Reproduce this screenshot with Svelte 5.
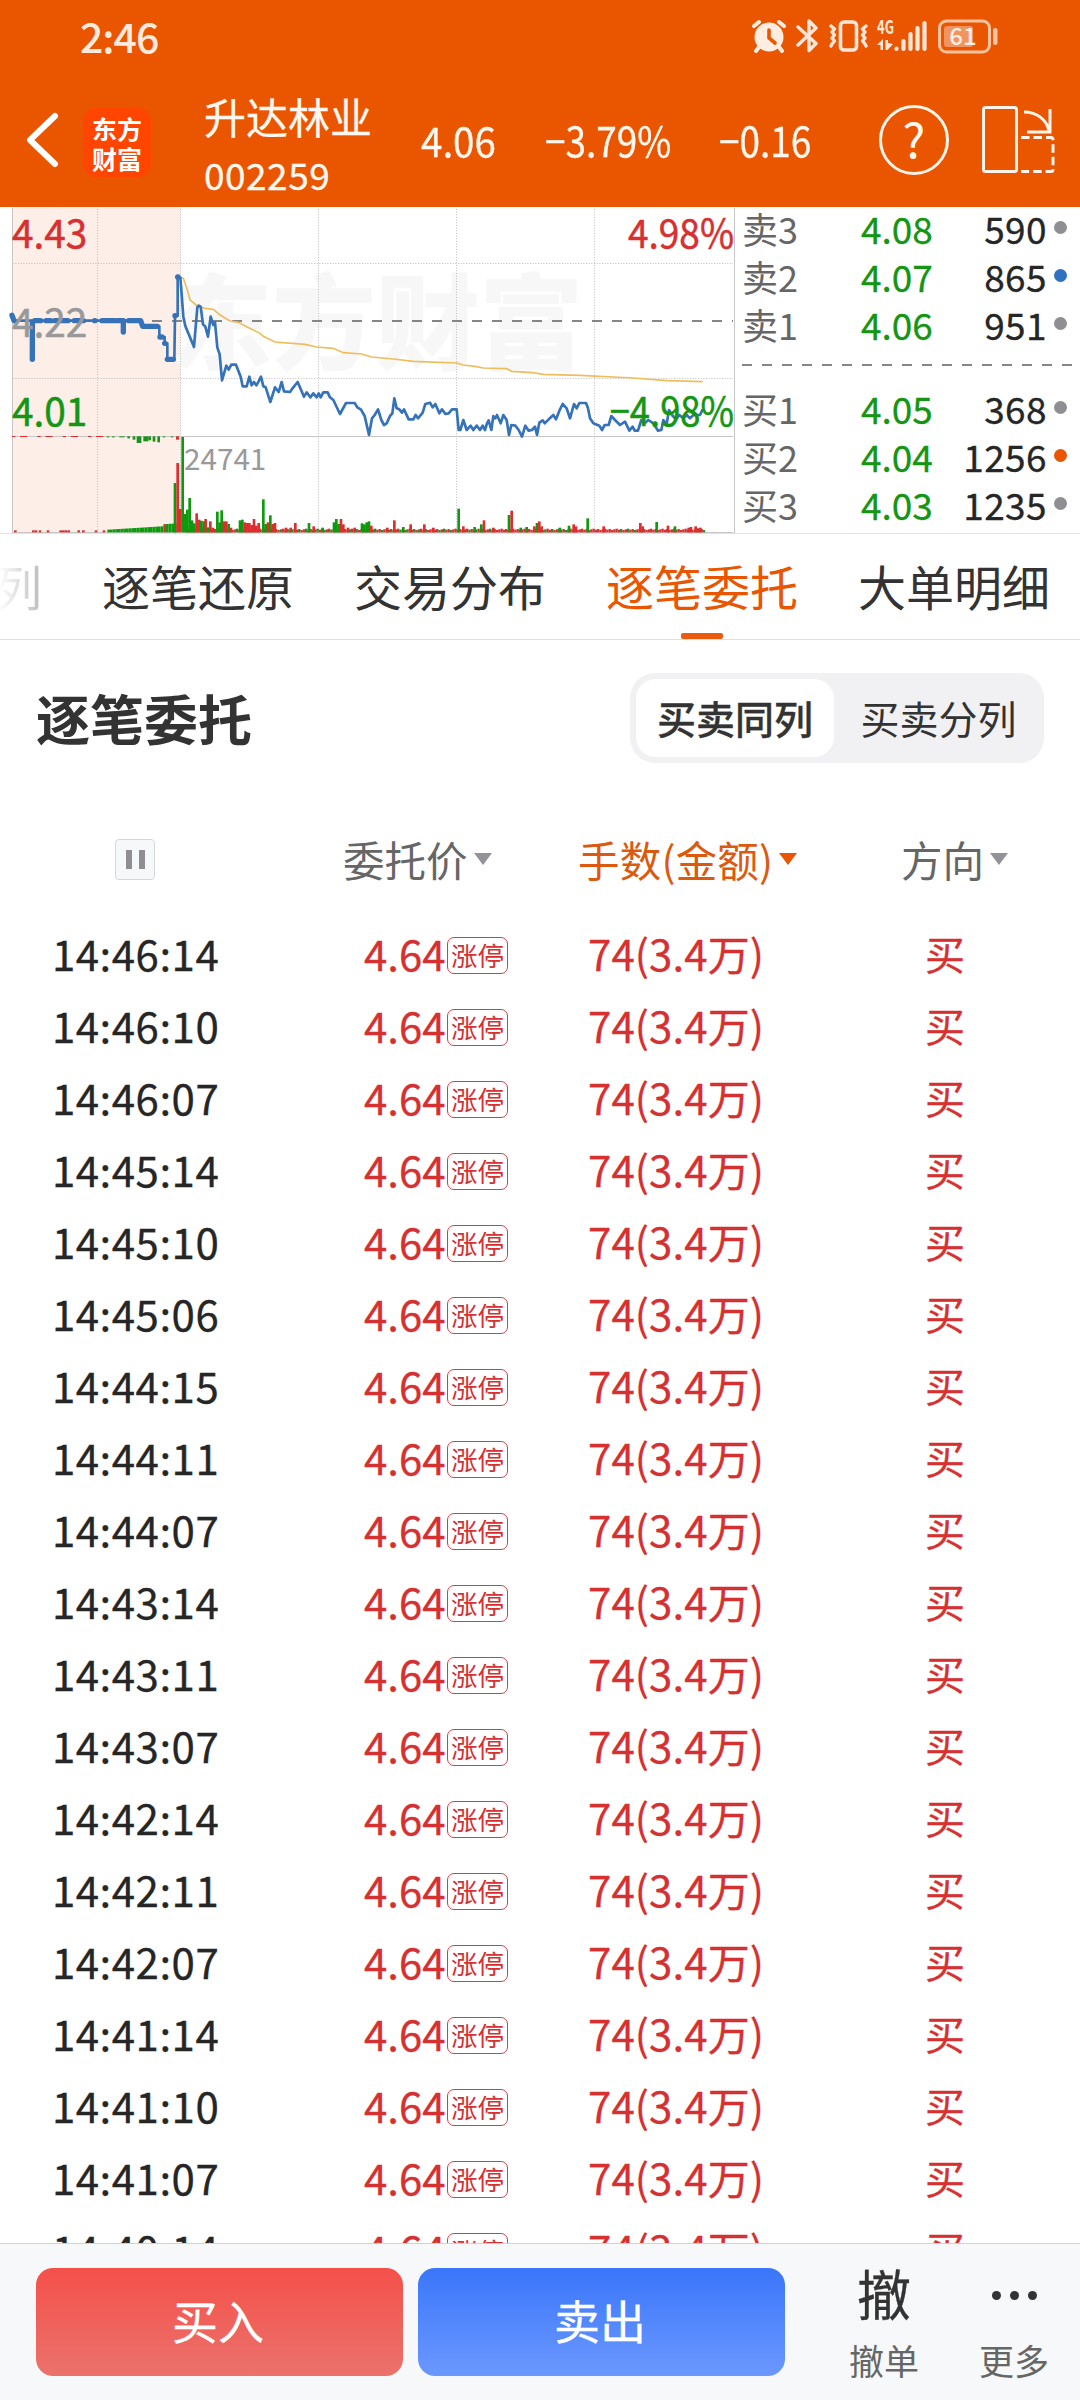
<script lang="ts">
	type Level = { label: string; price: string; qty: string; dot: string };
	type Bar = [x: number, height: number, up: boolean];

	const asks: Level[] = [
		{ label: '卖3', price: '4.08', qty: '590', dot: 'grey' },
		{ label: '卖2', price: '4.07', qty: '865', dot: 'blue' },
		{ label: '卖1', price: '4.06', qty: '951', dot: 'grey' }
	];

	const bids: Level[] = [
		{ label: '买1', price: '4.05', qty: '368', dot: 'grey' },
		{ label: '买2', price: '4.04', qty: '1256', dot: 'orange' },
		{ label: '买3', price: '4.03', qty: '1235', dot: 'grey' }
	];

	const tabs = ['逐笔还原', '交易分布', '逐笔委托', '大单明细'];
	let activeTab = $state('逐笔委托');

	const modes = ['买卖同列', '买卖分列'];
	let mode = $state('买卖同列');

	const times = [
		'14:46:14', '14:46:10', '14:46:07', '14:45:14', '14:45:10', '14:45:06', '14:44:15',
		'14:44:11', '14:44:07', '14:43:14', '14:43:11', '14:43:07', '14:42:14', '14:42:11',
		'14:42:07', '14:41:14', '14:41:10', '14:41:07', '14:40:14'
	];

	// chart units are a third of a pixel
	const auction =
		'36,345 42,362 97,362 97,478 97,362 370,362 370,396 370,362 425,362 425,379 478,379 478,411 494,411 494,430 502,430 502,478 523,478 525,347 533,347 533,231 541,231';
	// stretches where consecutive auction ticks merge into a thick stroke
	const auctionTicks =
		'M36 346L42 362M97 366V478M104 362H122M138 362H152M164 362H204M223 362H250M284 362H285M306 362H344M352 362H370V396M386 362H422L428 379H472M480 411H486M494 430H495M502 478H520M525 347H526M533 231H534';
	const price =
		'541,231 550,350 556,378 582,441 592,322 596,317 602,320 609,373 616,380 624,410 632,350 640,375 645,367 652,443 659,463 666,541 679,497 686,509 694,494 708,494 722,530 728,559 740,559 748,530 755,556 762,546 769,556 776,544 783,530 790,559 797,562 811,606 825,562 836,576 845,546 852,574 870,576 880,562 893,546 912,590 920,577 931,592 940,580 950,592 956,580 962,592 970,577 983,577 990,592 1000,600 1020,642 1038,609 1064,609 1072,622 1083,629 1094,648 1107,705 1116,655 1124,645 1134,628 1144,660 1152,675 1160,670 1170,648 1177,640 1183,595 1190,625 1198,628 1206,638 1212,628 1226,658 1240,658 1247,645 1254,655 1268,638 1276,612 1290,608 1298,622 1306,612 1318,640 1326,628 1336,642 1346,640 1356,628 1370,628 1376,690 1381,690 1390,660 1400,690 1412,677 1420,690 1430,677 1440,690 1448,677 1455,690 1461,670 1466,661 1474,690 1480,648 1486,655 1491,645 1502,670 1510,645 1520,660 1527,705 1534,675 1546,677 1556,690 1566,710 1576,677 1586,692 1596,690 1605,680 1611,705 1618,668 1628,661 1634,670 1646,658 1660,645 1668,658 1680,628 1688,612 1700,625 1710,655 1722,612 1730,625 1738,609 1758,609 1764,625 1770,655 1780,670 1798,677 1806,690 1814,675 1826,675 1834,648 1845,660 1860,675 1875,665 1888,692 1898,680 1904,692 1914,692 1924,660 1934,670 1945,660 1960,670 1974,692 1984,690 1990,660 2000,672 2007,630 2016,645 2028,658 2038,645 2050,655 2060,645 2070,655 2080,645 2100,645 2108,628';
	const average =
		'541,231 550,235 562,270 570,300 592,318 615,325 640,328 660,345 690,363 715,367 740,380 780,400 790,409 825,426 915,433 950,441 1000,445 1030,458 1085,462 1115,471 1180,477 1240,484 1370,489 1390,495 1430,500 1450,504 1520,506 1535,514 1600,518 1630,523 1740,526 1900,534 2000,542 2108,545';

	const peaks: Bar[] = [
		[525, 148, false], [533, 208, true], [541, 70, true], [548, 286, false], [555, 55, false],
		[562, 68, false], [569, 103, false], [576, 36, false], [583, 27, false], [590, 57, true],
		[597, 38, true], [604, 35, false], [611, 33, false], [617, 40, true], [624, 15, false],
		[631, 33, true], [638, 14, true], [645, 10, true], [652, 62, false], [659, 30, false],
		[665, 66, false], [672, 33, true], [679, 33, true], [686, 25, false], [693, 14, true],
		[720, 36, false], [727, 38, false], [734, 30, true], [741, 28, true], [748, 28, true],
		[755, 22, true], [762, 40, true], [769, 20, true], [776, 28, true], [790, 99, false],
		[797, 25, false], [804, 30, true], [811, 51, false], [818, 25, true], [825, 28, true],
		[858, 14, true], [872, 14, true], [886, 28, true], [927, 28, false], [941, 18, true],
		[968, 14, false], [1002, 30, false], [1009, 40, false], [1016, 25, false], [1023, 40, true],
		[1030, 24, true], [1044, 14, true], [1064, 14, true], [1086, 27, false], [1093, 24, false],
		[1100, 30, false], [1107, 33, false], [1114, 20, true], [1162, 14, true], [1183, 36, true],
		[1210, 16, false], [1232, 24, true], [1273, 24, true], [1300, 14, true], [1376, 71, false],
		[1390, 18, true], [1424, 16, false], [1444, 24, false], [1452, 36, true], [1480, 14, true],
		[1527, 52, false], [1535, 65, true], [1562, 14, false], [1580, 16, false], [1603, 18, true],
		[1611, 28, false], [1618, 33, true], [1625, 18, true], [1680, 14, false], [1707, 20, false],
		[1721, 24, true], [1728, 18, true], [1763, 42, false], [1811, 18, true], [1921, 28, true],
		[1928, 18, true], [1970, 31, false], [2004, 20, true], [2025, 18, false], [2066, 14, true],
		[2073, 16, true], [2087, 18, true], [2094, 12, true], [2101, 14, true]
	];

	// quiet minutes between the peaks
	const quiet: Bar[] = Array.from({ length: 226 }, (_, i) => [
		556 + i * 6.9,
		7 + ((i * 37) % 5),
		(i * 29) % 11 > 3 || (i > 120 && i % 3 > 0)
	]);

	// opening call auction: matched volume grows towards 9:25
	const opening: Bar[] = [
		...[42, 96, 104, 116, 140, 178, 186, 194, 202, 232, 246, 284, 308].map((x): Bar => [x, 6, true]),
		...Array.from({ length: 26 }, (_, i): Bar => [322 + i * 8, 8 + i * 0.5 + (i > 20 ? 6 : 0), i === 21])
	];
	const unmatched = [
		[320, 3], [336, 3], [358, 3], [366, 3], [382, 6], [398, 10], [410, 20], [416, 20], [430, 15],
		[437, 15], [445, 12], [458, 16], [472, 18], [488, 3], [512, 3]
	];
</script>

<div class="screen">
	<div class="status">
		<span class="clock">2:46</span>
		<div class="status-icons">
			<svg class="alarm" width="34" height="34" viewBox="0 0 34 34">
				<circle cx="17" cy="18" r="14.5" fill="#ffede2" />
				<path d="M2 7L7 3M32 7L27 3M7 28L4 32M27 28L30 32" stroke="#ffede2" stroke-width="4" stroke-linecap="round" />
				<path d="M17 11V19L23 24" fill="none" stroke="#ea5500" stroke-width="3.6" stroke-linecap="round" />
			</svg>
			<svg class="bluetooth" width="23" height="36" viewBox="0 0 23 36">
				<path d="M2 9L20 25.500L13 32.500V3L20 10L2 27" fill="none" stroke="#ffe6d8" stroke-width="3.4" stroke-linecap="round" stroke-linejoin="round" />
			</svg>
			<svg class="vibrate" width="40" height="34" viewBox="0 0 40 34">
				<rect x="11.5" y="3" width="16" height="28" rx="3.5" fill="none" stroke="#ffe6d8" stroke-width="3.6" />
				<path d="M2 7L5.500 10L3 13L5.500 16L3 19L5.500 22L3 25L2 27M37 7L33.500 10L36 13L33.500 16L36 19L33.500 22L36 25L37 27" fill="none" stroke="#ffe6d8" stroke-width="3.4" stroke-linejoin="round" stroke-linecap="round" />
			</svg>
			<svg class="signal" width="52" height="34" viewBox="0 0 52 34">
				<text x="0" y="15" font-size="19" font-weight="700" textLength="17" lengthAdjust="spacingAndGlyphs" fill="#ffe6d8">4G</text>
				<path d="M0 26L6 20V31H3.500V26ZM8.500 21H11V24L16 25L10.500 31H8.500Z" fill="#ffe6d8" />
				<path d="M19.500 29.500V30M26.500 22V30M33.500 15V30M40.500 9V30M47.500 4V30" stroke="#ffe6d8" stroke-width="4.2" stroke-linecap="round" />
			</svg>
			<svg class="battery" width="62" height="35" viewBox="0 0 62 35">
				<rect x="1.500" y="2" width="50" height="31" rx="7" fill="none" stroke="#f9c3a1" stroke-width="3" />
				<rect x="6" y="7" width="29" height="21" rx="3" fill="#f29460" />
				<rect x="55" y="9" width="4.500" height="17" rx="2" fill="#f9c3a1" />
				<text x="25" y="26" font-size="24" font-weight="500" text-anchor="middle" fill="#fff0e6">61</text>
			</svg>
		</div>
	</div>

	<header class="header">
		<svg class="back" width="36" height="60" viewBox="0 0 36 60">
			<path d="M31 6L6 30L31 54" fill="none" stroke="#fff" stroke-width="6" stroke-linecap="round" stroke-linejoin="round" />
		</svg>
		<div class="logo"><span>东方</span><span>财富</span></div>
		<div class="stock">
			<span class="stock-name">升达林业</span>
			<span class="stock-code">002259</span>
		</div>
		<span class="quote last">4.06</span>
		<span class="quote percent">−3.79%</span>
		<span class="quote change">−0.16</span>
		<div class="help">?</div>
		<svg class="rotate" width="74" height="68" viewBox="0 0 74 68">
			<g fill="none" stroke="#fff4ea" stroke-width="3">
				<rect x="2.500" y="1.500" width="33" height="64" rx="2" />
				<path d="M43 6C56 6 66 14 68 25M69 3V26H46" />
				<path d="M40 31.500H70Q72 31.500 72 33.500V63.500Q72 65.500 70 65.500H40" stroke-dasharray="8.500 4" />
			</g>
		</svg>
	</header>

	<section class="market">
		<svg class="chart" width="737" height="326" viewBox="0 21 2211 978">
			<rect x="38" y="21" width="504" height="976" fill="#fdeee8" />
			<text class="watermark" x="505" y="486" font-size="312" textLength="1245">东方财富</text>
			<g stroke="#bdbdbd" stroke-width="3" stroke-dasharray="3 5">
				<path d="M292.500 27V997M541.500 27V997M955.500 27V997M1369.500 27V997M1783.500 27V997M38 190.500H2199M38 535.500H2199" />
			</g>
			<g stroke="#c6c6c6" stroke-width="3">
				<path d="M37.500 24V999M36 709.500H2199M36 997.500H2199M2203.500 24V999" />
			</g>
			<path d="M456 363H2199" stroke="#858585" stroke-width="6" stroke-dasharray="30 30" />
			<text class="axis up" x="36" y="145" textLength="226" lengthAdjust="spacingAndGlyphs">4.43</text>
			<text class="axis up" x="1884" y="145" textLength="318" lengthAdjust="spacingAndGlyphs">4.98%</text>
			{#each opening as [x, h, up]}
				<rect {x} y={997 - h} width="8" height={h} fill={up ? '#df2d2d' : '#0e990e'} />
			{/each}
			{#each quiet as [x, h, up]}
				<rect {x} y={997 - h} width="7" height={h} fill={up ? '#d93030' : '#1b921b'} />
			{/each}
			{#each peaks as [x, h, up]}
				<rect x={x - 4} y={997 - h} width="8" height={h} fill={up ? '#df2d2d' : '#0e990e'} />
			{/each}
			{#each unmatched as [x, h]}
				<rect {x} y="709" width="8" height={h} fill="#1b921b" />
			{/each}
			<rect x="528" y="709" width="9" height="10" fill="#df2d2d" />
			<path d="M36 709.500H320" stroke="#df2d2d" stroke-width="3" stroke-dasharray="10 14 22 30" />
			<polyline class="average" points={average} />
			<polyline class="price" points={auction} />
			<path class="ticks" d={auctionTicks} />
			<polyline class="price" points={price} />
			<text class="axis mid" x="36" y="411" textLength="226" lengthAdjust="spacingAndGlyphs">4.22</text>
			<text class="axis down" x="36" y="679" textLength="226" lengthAdjust="spacingAndGlyphs">4.01</text>
			<text class="axis down" x="1829" y="679" textLength="373" lengthAdjust="spacingAndGlyphs">−4.98%</text>
			<text class="volume" x="552" y="810">24741</text>
		</svg>

		<div class="book">
			{#each asks as level}
				{@render row(level)}
			{/each}
			<svg class="divider" width="332" height="36" viewBox="0 0 332 36">
				<path d="M0 18H332" stroke="#858585" stroke-width="2" stroke-dasharray="10 10" />
			</svg>
			{#each bids as level}
				{@render row(level)}
			{/each}
		</div>
	</section>

	{#snippet row(level: Level)}
		<div class="level">
			<span class="level-label">{level.label}</span>
			<span class="level-price">{level.price}</span>
			<span class="level-qty">{level.qty}</span>
			<i class="dot {level.dot}"></i>
		</div>
	{/snippet}

	<nav class="tabs">
		<span class="tab cut">列</span>
		{#each tabs as tab}
			<button class="tab" class:active={tab === activeTab} onclick={() => (activeTab = tab)}>{tab}</button>
		{/each}
	</nav>

	<div class="title-bar">
		<h1>逐笔委托</h1>
		<div class="segment">
			{#each modes as item}
				<button class:selected={item === mode} onclick={() => (mode = item)}>{item}</button>
			{/each}
		</div>
	</div>

	<div class="columns">
		<span class="pause"><i></i><i></i></span>
		<span class="col-price">委托价<i class="arrow"></i></span>
		<span class="col-lots">手数(金额)<i class="arrow"></i></span>
		<span class="col-side">方向<i class="arrow"></i></span>
	</div>

	<div class="orders">
		{#each times as time}
			<div class="order">
				<span class="time">{time}</span>
				<span class="order-price">4.64</span>
				<span class="tag">涨停</span>
				<span class="lots">74(3.4万)</span>
				<span class="side">买</span>
			</div>
		{/each}
	</div>

	<footer class="footer">
		<button class="trade buy">买入</button>
		<button class="trade sell">卖出</button>
		<div class="action cancel">
			<span class="glyph">撤</span>
			<span class="caption">撤单</span>
		</div>
		<div class="action">
			<span class="glyph more"><i></i><i></i><i></i></span>
			<span class="caption">更多</span>
		</div>
	</footer>
</div>

<style>
	:global(body) {
		margin: 0;
		background: #fff;
	}

	.screen {
		display: flex;
		flex-direction: column;
		width: 1080px;
		height: 2400px;
		overflow: hidden;
		background: #fff;
		color: #262626;
		font-family: 'Noto Sans CJK SC', sans-serif;
		white-space: nowrap;
		-webkit-text-stroke: 0.3px currentColor;
	}

	button {
		margin: 0;
		padding: 0;
		border: 0;
		background: none;
		color: inherit;
		font: inherit;
	}

	svg {
		display: block;
		flex: none;
		-webkit-text-stroke: 0;
	}

	.status {
		display: flex;
		justify-content: space-between;
		box-sizing: border-box;
		height: 72px;
		padding: 0 80px 0 80px;
		background: #ea5500;
	}

	.clock {
		color: #ffeadd;
		font-size: 41px;
		font-weight: 500;
		line-height: 70px;
		letter-spacing: -1px;
		-webkit-text-stroke: 0;
	}

	.status-icons {
		display: flex;
		align-items: flex-start;
		padding-top: 19px;
	}

	.bluetooth {
		margin-left: 10px;
		margin-top: -1px;
	}

	.vibrate {
		margin-left: 10px;
	}

	.signal {
		margin-left: 8px;
	}

	.battery {
		margin-left: 9px;
	}

	.header {
		display: flex;
		align-items: flex-start;
		height: 135px;
		background: #ea5500;
		color: #fff8f0;
	}

	.back {
		margin: 38px 0 0 24px;
	}

	.logo {
		display: flex;
		flex-direction: column;
		justify-content: center;
		align-items: center;
		flex: none;
		width: 68px;
		height: 69px;
		margin: 36px 0 0 23px;
		border-radius: 14px;
		background: #ff4500;
		color: #fff;
		font-size: 25px;
		font-weight: 700;
		line-height: 30px;
		-webkit-text-stroke: 0;
	}

	.stock {
		display: flex;
		flex-direction: column;
		width: 217px;
		margin: 13px 0 0 53px;
	}

	.stock-name {
		font-size: 42px;
		line-height: 62px;
	}

	.stock-code {
		font-size: 37px;
		line-height: 54px;
		letter-spacing: 0.5px;
	}

	.quote {
		flex: none;
		margin-top: 37px;
		font-size: 41px;
		line-height: 60px;
		transform: scaleX(0.9);
		transform-origin: left;
	}

	.last {
		width: 124px;
		transform: scaleX(0.94);
	}

	.percent {
		width: 174px;
	}

	.change {
		width: 160px;
	}

	.help {
		flex: none;
		box-sizing: border-box;
		width: 70px;
		height: 70px;
		margin: 33px 32px 0 0;
		border: 3px solid #fff4ea;
		border-radius: 50%;
		font-size: 48px;
		line-height: 59px;
		text-align: center;
		-webkit-text-stroke: 0;
	}

	.rotate {
		margin-top: 34px;
	}

	.market {
		display: flex;
		height: 326px;
		border-bottom: 1px solid #e2e2e2;
	}

	.watermark {
		fill: #f7f7f7;
		font-weight: 900;
	}

	.axis {
		font-size: 119px;
		stroke-width: 1.5;
	}

	.up {
		fill: #d63031;
		stroke: #d63031;
	}

	.mid {
		fill: #999;
		stroke: #999;
	}

	.down {
		fill: #149614;
		stroke: #149614;
	}

	.volume {
		font-size: 89px;
		fill: #999;
	}

	.average {
		fill: none;
		stroke: #efbd5c;
		stroke-width: 5;
	}

	.price {
		fill: none;
		stroke: #3572b8;
		stroke-width: 8;
		stroke-linejoin: round;
	}

	.ticks {
		fill: none;
		stroke: #3572b8;
		stroke-width: 16;
		stroke-linecap: round;
		stroke-linejoin: round;
	}

	.book {
		display: flex;
		flex-direction: column;
		width: 343px;
		margin-top: -3px;
	}

	.divider {
		margin: -1px 0 1px 5px;
	}

	.level {
		display: flex;
		align-items: center;
		height: 48px;
		padding-left: 5px;
		line-height: 47px;
	}

	.level-label {
		width: 119px;
		color: #666;
		font-size: 36px;
		-webkit-text-stroke: 0;
	}

	.level-price {
		width: 81px;
		color: #149614;
		font-size: 37px;
	}

	.level-qty {
		width: 105px;
		font-size: 37px;
		letter-spacing: 0.4px;
		text-align: right;
	}

	.dot {
		width: 13px;
		height: 13px;
		margin: -1px 0 0 7px;
		border-radius: 50%;
	}

	.grey {
		background: #8e8e93;
	}

	.blue {
		background: #3070c0;
	}

	.orange {
		background: #ea5500;
	}

	.tabs {
		display: flex;
		gap: 60px;
		height: 105px;
		border-bottom: 1px solid #e0e0e0;
		color: #333;
		font-size: 48px;
		line-height: 102px;
		-webkit-text-stroke: 0;
	}

	.tab {
		position: relative;
		flex: none;
		height: 105px;
		padding-bottom: 3px;
	}

	.cut {
		box-sizing: border-box;
		margin-left: -6px;
		background: linear-gradient(90deg, #fff 10%, #bbb);
		background-clip: text;
		color: transparent;
	}

	.tab.active {
		color: #ea5500;
	}

	.tab.active::after {
		content: '';
		position: absolute;
		bottom: 0;
		left: 75px;
		width: 42px;
		height: 6px;
		border-radius: 2px;
		background: #ea5b10;
	}

	.title-bar {
		display: flex;
		justify-content: space-between;
		align-items: center;
		height: 90px;
		padding: 33px 36px 0;
		color: #333;
	}

	h1 {
		margin: 0;
		font-size: 54px;
		font-weight: 700;
		line-height: 80px;
		-webkit-text-stroke: 0;
	}

	.segment {
		display: flex;
		box-sizing: border-box;
		width: 414px;
		height: 90px;
		padding: 6px;
		border-radius: 25px;
		background: #f1f1f4;
	}

	.segment button {
		flex: none;
		width: 198px;
		padding-bottom: 2px;
		border-radius: 20px;
		font-size: 39px;
		line-height: 75px;
	}

	.segment button + button {
		width: 209px;
		-webkit-text-stroke: 0;
	}

	.segment .selected {
		background: #fff;
		font-weight: 500;
	}

	.columns {
		display: flex;
		align-items: center;
		height: 60px;
		padding: 66px 0 28px 115px;
		color: #666;
		font-size: 41.5px;
		line-height: 60px;
		-webkit-text-stroke: 0;
	}

	.pause {
		display: flex;
		justify-content: center;
		align-items: center;
		gap: 7px;
		box-sizing: border-box;
		width: 40px;
		height: 41px;
		border: 1px solid #d5d7dd;
		border-radius: 4px;
		background: #f7f8fa;
	}

	.pause i {
		width: 6px;
		height: 19px;
		background: #8e8e93;
	}

	.col-price,
	.col-lots,
	.col-side {
		display: flex;
		align-items: center;
	}

	.col-price {
		width: 235px;
		margin-left: 188px;
	}

	.col-lots {
		width: 323px;
		color: #dc5a10;
		letter-spacing: 0.2px;
	}

	.arrow {
		margin: 0 0 0 6px;
		border: 9px solid transparent;
		border-top: 12px solid #929297;
		border-bottom: 0;
	}

	.col-lots .arrow {
		border-top-color: #ea5500;
	}

	.orders {
		height: 1326px;
		overflow: hidden;
	}

	.order {
		display: flex;
		align-items: center;
		height: 72px;
		padding-left: 52px;
		color: #d63031;
		font-size: 42px;
		line-height: 72px;
	}

	.time {
		width: 312px;
		color: #262626;
		letter-spacing: 0.5px;
	}

	.order-price {
		width: 83px;
	}

	.tag {
		box-sizing: border-box;
		width: 61px;
		height: 37px;
		margin-top: 5px;
		border: 1px solid #c04848;
		border-radius: 7px;
		font-size: 26.5px;
		line-height: 33px;
		text-align: center;
		-webkit-text-stroke: 0;
	}

	.lots {
		width: 337px;
		margin-left: 80px;
		letter-spacing: 0.1px;
	}

	.side {
		font-size: 40px;
	}

	.footer {
		display: flex;
		align-items: flex-start;
		flex: 1;
		padding: 24px 0 0 36px;
		border-top: 1px solid #d0d2d5;
		background: #f6f8fa;
	}

	.trade {
		box-sizing: border-box;
		width: 367px;
		height: 108px;
		margin-right: 15px;
		padding: 0 3px 5px 0;
		border-radius: 17px;
		color: #fff;
		font-size: 46px;
		line-height: 103px;
	}

	.buy {
		background: linear-gradient(#f5504a, #eb726c);
	}

	.sell {
		background: linear-gradient(#3a76fa, #6b98ff);
	}

	.action {
		display: flex;
		flex-direction: column;
		align-items: center;
		width: 130px;
	}

	.cancel {
		margin-left: 19px;
	}

	.glyph {
		height: 70px;
		margin-top: -10px;
		color: #333;
		font-size: 54px;
		line-height: 70px;
	}

	.more {
		display: flex;
		align-items: center;
		gap: 9px;
		height: 74px;
		margin-bottom: -4px;
	}

	.more i {
		width: 9px;
		height: 9px;
		border-radius: 50%;
		background: #333;
	}

	.caption {
		color: #666;
		font-size: 35px;
		line-height: 64px;
		-webkit-text-stroke: 0;
	}
</style>
